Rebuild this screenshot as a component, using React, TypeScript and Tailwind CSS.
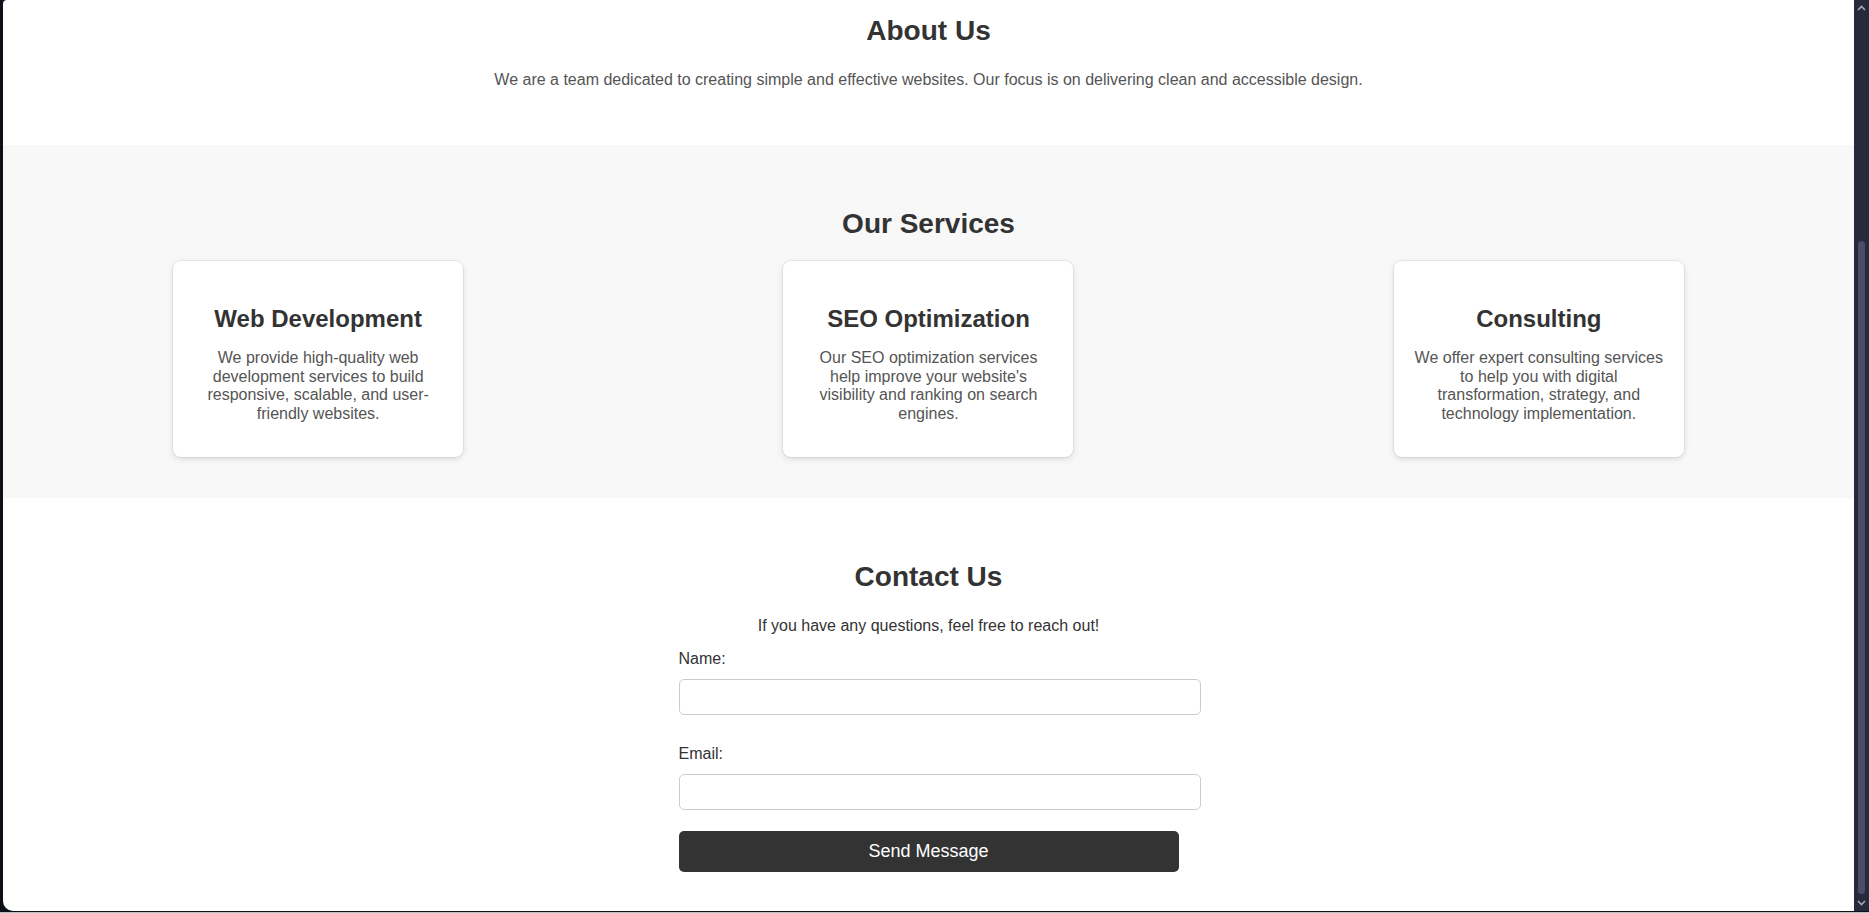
import React from 'react';

const services = [{
  id: 1,
  title: 'Web Development',
  description: 'We provide high-quality web development services to build responsive, scalable, and user-friendly websites.'
}, {
  id: 2,
  title: 'SEO Optimization',
  description: "Our SEO optimization services help improve your website's visibility and ranking on search engines."
}, {
  id: 3,
  title: 'Consulting',
  description: 'We offer expert consulting services to help you with digital transformation, strategy, and technology implementation.'
}];

const Chevron = ({ up }: { up?: boolean }) => <svg width="9" height="6" viewBox="0 0 9 6" fill="none">
    <path d={up ? 'M1 5 L4.5 1.5 L8 5' : 'M1 1 L4.5 4.5 L8 1'} stroke="#a3a8bc" strokeWidth="1.6" />
  </svg>;

const App = () => {
  return <div className="h-[913px] w-full overflow-hidden bg-[#0d1117] flex flex-col font-['Liberation_Sans',Arial,sans-serif]">
      <div className="h-[911px] flex">
        <div className="w-[3px] shrink-0" />
        <main className="flex-1 bg-white rounded-tl-[4px] rounded-bl-[10px] overflow-hidden flex flex-col text-center">
          <section className="pt-[15px] pb-[39px] px-5">
            <h2 className="text-[28px] leading-[1.15] font-bold text-[#333] mb-[24px]">About Us</h2>
            <p className="text-[16px] leading-[1.15] text-[#555] mb-4">
              We are a team dedicated to creating simple and effective websites. Our focus is on delivering clean and accessible design.
            </p>
          </section>

          <section className="bg-[#f8f8f8] pt-[63px] pb-[41px] px-[10px]">
            <h2 className="text-[28px] leading-[1.15] font-bold text-[#333] mb-[21px]">Our Services</h2>
            <div className="flex justify-around">
              {services.map(service => <div key={service.id} className="w-[290px] h-[196px] bg-white rounded-[8px] p-5 shadow-[0_2px_6px_rgba(0,0,0,0.13)] ring-1 ring-black/5">
                  <h3 className="mt-[24px] mb-[17px] text-[24px] leading-[1.15] font-bold text-[#333]">{service.title}</h3>
                  <p className="text-[16px] leading-[1.15] text-[#555]">{service.description}</p>
                </div>)}
            </div>
          </section>

          <section className="pt-[63px] px-5 flex flex-col items-center">
            <h2 className="text-[28px] leading-[1.15] font-bold text-[#333] mb-[24px]">Contact Us</h2>
            <p className="text-[16px] leading-[1.15] text-[#333] mb-[15px]">If you have any questions, feel free to reach out!</p>
            <form className="w-[500px] text-left" onSubmit={e => e.preventDefault()}>
              <label className="block text-[16px] leading-[1.15] text-[#333] mb-[10.5px]">Name:</label>
              <input type="text" className="block w-[522px] h-[36px] border border-[#ccc] rounded-[5px] px-[10px] bg-white outline-none mb-[30px]" />
              <label className="block text-[16px] leading-[1.15] text-[#333] mb-[10.5px]">Email:</label>
              <input type="email" className="block w-[522px] h-[36px] border border-[#ccc] rounded-[5px] px-[10px] bg-white outline-none mb-[21px]" />
              <button type="submit" className="w-[500px] h-[41px] bg-[#333] text-white text-[18px] leading-[1.15] rounded-[5px]">
                Send Message
              </button>
            </form>
          </section>
        </main>
        <div className="w-[15px] shrink-0 bg-[#262b3b] flex flex-col items-center">
          <div className="h-[15px] flex items-center justify-center">
            <Chevron up />
          </div>
          <div className="h-[226px]" />
          <div className="w-[7px] h-[653px] rounded-full bg-[#4a4d68]" />
          <div className="flex-1 flex items-center justify-center">
            <Chevron />
          </div>
        </div>
      </div>
      <div className="h-[1px] bg-[#0d1117]" />
      <div className="h-[1px] bg-[#b9c3c3]" />
    </div>;
};

export default App;
